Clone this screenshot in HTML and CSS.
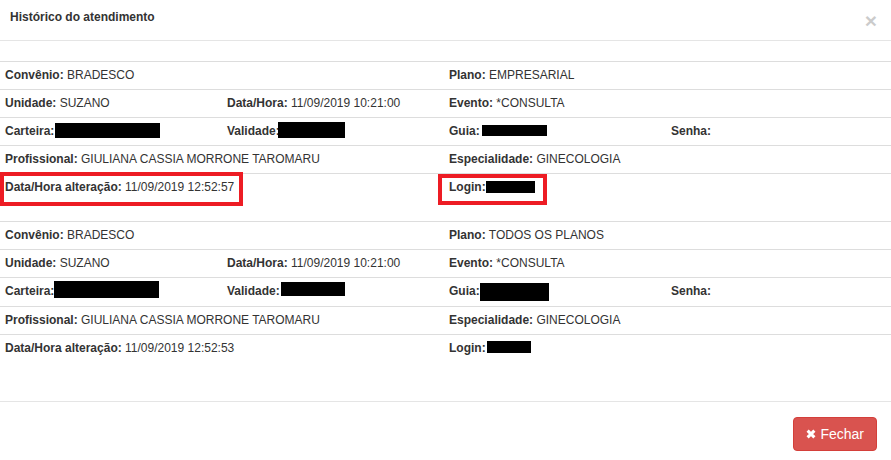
FILE: index.html
```html
<!DOCTYPE html>
<html lang="pt-BR">
<head>
    <meta charset="UTF-8">
    <title>Histórico do atendimento</title>
    <link rel="stylesheet" href="styles.css">
</head>
<body>
    <div class="modal">
        <div class="modal-header">
            <h4 class="modal-title">Histórico do atendimento</h4>
            <span class="close">&times;</span>
        </div>

        <div class="modal-body">
            <table class="hist">
                <colgroup><col class="c"><col class="c"><col class="c"><col></colgroup>
                <tr>
                    <td colspan="2"><b>Convênio:</b> BRADESCO</td>
                    <td colspan="2"><b>Plano:</b> EMPRESARIAL</td>
                </tr>
                <tr>
                    <td><b>Unidade:</b> SUZANO</td>
                    <td><b>Data/Hora:</b> 11/09/2019 10:21:00</td>
                    <td colspan="2"><b>Evento:</b> *CONSULTA</td>
                </tr>
                <tr>
                    <td><b>Carteira:</b><span class="redact r1-cart"></span></td>
                    <td><b>Validade:</b><span class="redact r1-val"></span></td>
                    <td><b>Guia:</b><span class="redact r1-guia"></span></td>
                    <td><b>Senha:</b></td>
                </tr>
                <tr>
                    <td colspan="2"><b>Profissional:</b> GIULIANA CASSIA MORRONE TAROMARU</td>
                    <td colspan="2"><b>Especialidade:</b> GINECOLOGIA</td>
                </tr>
                <tr>
                    <td colspan="2"><b>Data/Hora alteração:</b> 11/09/2019 12:52:57</td>
                    <td colspan="2"><b>Login:</b><span class="redact r1-login"></span></td>
                </tr>
            </table>

            <table class="hist">
                <colgroup><col class="c"><col class="c"><col class="c"><col></colgroup>
                <tr>
                    <td colspan="2"><b>Convênio:</b> BRADESCO</td>
                    <td colspan="2"><b>Plano:</b> TODOS OS PLANOS</td>
                </tr>
                <tr>
                    <td><b>Unidade:</b> SUZANO</td>
                    <td><b>Data/Hora:</b> 11/09/2019 10:21:00</td>
                    <td colspan="2"><b>Evento:</b> *CONSULTA</td>
                </tr>
                <tr>
                    <td><b>Carteira:</b><span class="redact r2-cart"></span></td>
                    <td><b>Validade:</b><span class="redact r2-val"></span></td>
                    <td><b>Guia:</b><span class="redact r2-guia"></span></td>
                    <td><b>Senha:</b></td>
                </tr>
                <tr>
                    <td colspan="2"><b>Profissional:</b> GIULIANA CASSIA MORRONE TAROMARU</td>
                    <td colspan="2"><b>Especialidade:</b> GINECOLOGIA</td>
                </tr>
                <tr>
                    <td colspan="2"><b>Data/Hora alteração:</b> 11/09/2019 12:52:53</td>
                    <td colspan="2"><b>Login:</b><span class="redact r2-login"></span></td>
                </tr>
            </table>
        </div>

        <div class="modal-footer">
            <button class="btn btn-danger">
                <svg class="ico" width="10" height="10" viewBox="0 0 10 10"><path d="M1.6 1.6 L8.4 8.4 M8.4 1.6 L1.6 8.4" stroke="#fff" stroke-width="3"/></svg>
                Fechar
            </button>
        </div>

        <!-- marcações em vermelho -->
        <div class="mark mark-date"></div>
        <div class="mark mark-login"></div>
    </div>
</body>
</html>
```

FILE: styles.css
```css
body {
    margin: 0;
    font-family: "Liberation Sans", Arial, sans-serif;
    font-size: 12px;
    color: #333;
    background: #fff;
}
.modal {
    position: relative;
    width: 891px;
}
.modal-header {
    display: flex;
    justify-content: space-between;
    align-items: center;
    height: 40px;
    padding: 0 14px 0 10px;
    border-bottom: 1px solid #e5e5e5;
}
.modal-title {
    margin: -5px 0 0;
    font-size: 12px;
    font-weight: bold;
    line-height: 17px;
}
.close {
    font-size: 21px;
    font-weight: bold;
    line-height: 1;
    color: #000;
    opacity: .2;
}
.modal-body {
    padding: 20px 0 19px;
}
.hist {
    width: 100%;
    table-layout: fixed;
    border-collapse: collapse;
    margin-bottom: 20px;
}
.hist col.c {
    width: 222px;
}
.hist td {
    border-top: 1px solid #ddd;
    padding: 5px;
    line-height: 17px;
    white-space: nowrap;
    vertical-align: top;
}
.redact {
    display: inline-block;
    vertical-align: top;
    background: #000;
}
.r1-cart  { width: 105px; height: 15px; margin: 0 0 0 1px; }
.r1-val   { width: 67px;  height: 16px; margin: -1px 0 0 -2px; }
.r1-guia  { width: 65px;  height: 11px; margin: 2px 0 0 2px; }
.r1-login { width: 49px;  height: 12px; margin: 2px 0 0 0; }
.r2-cart  { width: 105px; height: 17px; margin: -2px 0 0 0; }
.r2-val   { width: 64px;  height: 14px; margin: -1px 0 0 1px; }
.r2-guia  { width: 69px;  height: 18px; margin: 0; }
.r2-login { width: 44px;  height: 12px; margin: 1px 0 0 1px; }
.modal-footer {
    border-top: 1px solid #e5e5e5;
    padding: 15px 14px 15px 15px;
    text-align: right;
}
.btn {
    display: inline-flex;
    align-items: center;
    gap: 4px;
    padding: 6px 12px;
    font-family: "Liberation Sans", Arial, sans-serif;
    font-size: 14px;
    line-height: 20px;
    border: 1px solid transparent;
    border-radius: 4px;
    cursor: pointer;
}
.btn-danger {
    color: #fff;
    background-color: #d9534f;
    border-color: #d43f3a;
}
.mark {
    position: absolute;
    border: 4px solid #ed1c24;
    box-sizing: border-box;
}
.mark-date {
    left: 0;
    top: 172px;
    width: 243px;
    height: 34px;
}
.mark-login {
    left: 438px;
    top: 174px;
    width: 109px;
    height: 31px;
}
```
